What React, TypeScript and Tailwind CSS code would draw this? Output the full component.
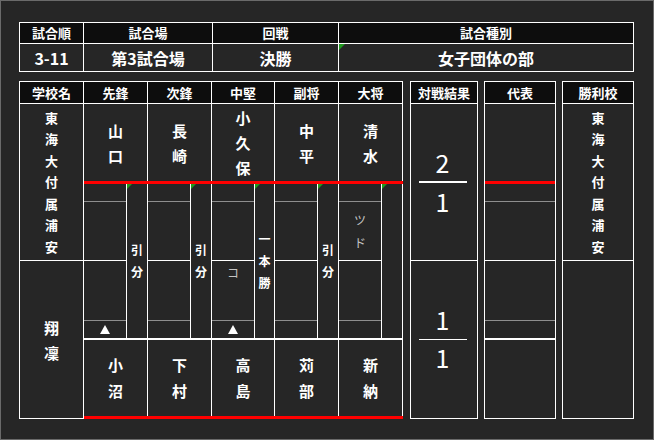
type Bout = {
  pos: string;
  w: string;
  top: string;
  bottom: string;
  result: string;
  upperMark?: string;
  lowerMark?: string;
  triangle?: boolean;
};

const bouts: Bout[] = [
  { pos: "先鋒", w: "w-[64px]", top: "山口", bottom: "小沼", result: "引分", triangle: true },
  { pos: "次鋒", w: "w-[64px]", top: "長崎", bottom: "下村", result: "引分" },
  { pos: "中堅", w: "w-[63px]", top: "小久保", bottom: "高島", result: "一本勝", lowerMark: "コ", triangle: true },
  { pos: "副将", w: "w-[64px]", top: "中平", bottom: "苅部", result: "引分" },
  { pos: "大将", w: "w-[64px]", top: "清水", bottom: "新納", result: "", upperMark: "ツド" },
];

const head = "bg-[#0d0d0d] text-[13px] font-bold flex items-center justify-center";

const Vertical = ({ text, className }: { text: string; className: string }) => (
  <div className={`flex flex-col items-center ${className}`}>
    {text.split("").map((c, i) => (
      <span key={i}>{c}</span>
    ))}
  </div>
);

const Flag = ({ size = 5 }: { size?: number }) => (
  <svg className="absolute left-0 top-0" width={size} height={size} viewBox="0 0 6 6">
    <polygon points="0,0 6,0 0,6" fill="#1f9a1f" />
  </svg>
);

const Triangle = () => (
  <svg width="10" height="9" viewBox="0 0 10 9">
    <polygon points="5,0 10,9 0,9" fill="#ffffff" />
  </svg>
);

const School = ({ name, big }: { name: string; big?: boolean }) =>
  big ? (
    <Vertical text={name} className="text-[15px] font-bold leading-[25px]" />
  ) : (
    <Vertical text={name} className="text-[13px] font-bold leading-[21.5px]" />
  );

const App = () => {
  return (
    <div className="w-[654px] h-[440px] bg-[#262626] border border-[#6a6a6a] pl-[18px] pt-[21px] text-white font-['Noto_Sans_CJK_JP',sans-serif]">
      {/* match info */}
      <div className="w-[615px] border-l border-t border-white flex flex-col">
        <div className="flex h-[21px]">
          <div className={`w-[64px] border-r border-b border-white ${head}`}>試合順</div>
          <div className={`w-[129px] border-r border-b border-white ${head}`}>試合場</div>
          <div className={`w-[126px] border-r border-b border-white ${head}`}>回戦</div>
          <div className={`w-[295px] border-r border-b border-white ${head}`}>試合種別</div>
        </div>
        <div className="flex h-[28px] text-[16px] font-bold">
          <div className="w-[64px] border-r border-b border-white flex items-center justify-center">3-11</div>
          <div className="w-[129px] border-r border-b border-white flex items-center justify-center">第3試合場</div>
          <div className="w-[126px] border-r border-b border-white flex items-center justify-center">決勝</div>
          <div className="relative w-[295px] border-r border-b border-white flex items-center justify-center">
            <Flag size={6} />
            女子団体の部
          </div>
        </div>
      </div>

      <div className="mt-[9px] flex items-start">
        {/* scoresheet */}
        <div className="flex border-l border-t border-white">
          <div className="w-[64px] border-r border-white flex flex-col">
            <div className={`h-[22px] border-b border-white ${head}`}>学校名</div>
            <div className="h-[157px] border-b border-white flex items-center justify-center">
              <School name="東海大付属浦安" />
            </div>
            <div className="h-[158px] border-b border-white flex items-center justify-center">
              <School name="翔凜" big />
            </div>
          </div>

          <div className="w-[319px] flex flex-col">
            <div className="flex h-[22px] border-b border-white">
              {bouts.map((b) => (
                <div key={b.pos} className={`${b.w} border-r border-white ${head}`}>
                  {b.pos}
                </div>
              ))}
            </div>
            <div className="flex h-[80px] border-b-[3px] border-[#ff0000]">
              {bouts.map((b) => (
                <div key={b.pos} className={`${b.w} border-r border-white flex items-center justify-center`}>
                  <Vertical text={b.top} className="text-[15px] font-bold leading-[25px]" />
                </div>
              ))}
            </div>
            <div className="flex h-[156px] border-b-2 border-white">
              {bouts.map((b) => (
                <div key={b.pos} className={`${b.w} border-r border-white flex`}>
                  <div className="w-[42px] flex flex-col">
                    <div className="h-[18px] border-b border-[#8e8e8e]" />
                    <div className="h-[59px] border-b border-white flex items-center justify-center">
                      {b.upperMark && (
                        <Vertical text={b.upperMark} className="text-[12px] leading-[23px] text-[#c4c4c4]" />
                      )}
                    </div>
                    <div className="h-[60px] border-b border-[#8e8e8e] flex justify-center">
                      {b.lowerMark && (
                        <span className="text-[12px] leading-[23px] text-[#c4c4c4]">{b.lowerMark}</span>
                      )}
                    </div>
                    <div className="flex-1 flex items-center justify-center">{b.triangle && <Triangle />}</div>
                  </div>
                  <div className="relative flex-1 border-l border-white flex items-center justify-center">
                    <Flag />
                    <Vertical text={b.result} className="text-[12px] font-bold leading-[22px]" />
                  </div>
                </div>
              ))}
            </div>
            <div className="flex h-[79px] border-b-[3px] border-[#ff0000]">
              {bouts.map((b) => (
                <div key={b.pos} className={`${b.w} border-r border-white flex items-center justify-center`}>
                  <Vertical text={b.bottom} className="text-[15px] font-bold leading-[26px]" />
                </div>
              ))}
            </div>
          </div>
        </div>

        {/* result */}
        <div className="ml-[7px] w-[68px] h-[338px] border border-white flex flex-col">
          <div className={`h-[22px] border-b border-white ${head}`}>対戦結果</div>
          <div className="h-[157px] border-b border-white flex flex-col items-center pt-[43px] pr-[3px]">
            <span className="h-[30px] text-[25px] leading-[30px]">2</span>
            <div className="mt-[4px] w-[48px] h-[2px] bg-white" />
            <span className="mt-[3px] h-[30px] text-[25px] leading-[30px]">1</span>
          </div>
          <div className="flex-1 flex flex-col items-center pt-[43px] pr-[3px]">
            <span className="h-[30px] text-[25px] leading-[30px]">1</span>
            <div className="mt-[5px] w-[48px] h-px bg-white" />
            <span className="mt-[2px] h-[30px] text-[25px] leading-[30px]">1</span>
          </div>
        </div>

        {/* representative */}
        <div className="ml-[6px] w-[72px] h-[338px] border border-white flex flex-col">
          <div className={`h-[22px] border-b border-white ${head}`}>代表</div>
          <div className="h-[80px] border-b-[3px] border-[#ff0000]" />
          <div className="h-[18px] border-b border-[#8e8e8e]" />
          <div className="h-[59px] border-b border-white" />
          <div className="h-[60px] border-b border-[#8e8e8e]" />
          <div className="h-[19px] border-b-2 border-white" />
          <div className="flex-1" />
        </div>

        {/* winner */}
        <div className="ml-[6px] w-[72px] h-[338px] border border-white flex flex-col">
          <div className={`h-[22px] border-b border-white ${head}`}>勝利校</div>
          <div className="h-[157px] border-b border-white flex items-center justify-center">
            <School name="東海大付属浦安" />
          </div>
          <div className="flex-1" />
        </div>
      </div>
    </div>
  );
};

export default App;
